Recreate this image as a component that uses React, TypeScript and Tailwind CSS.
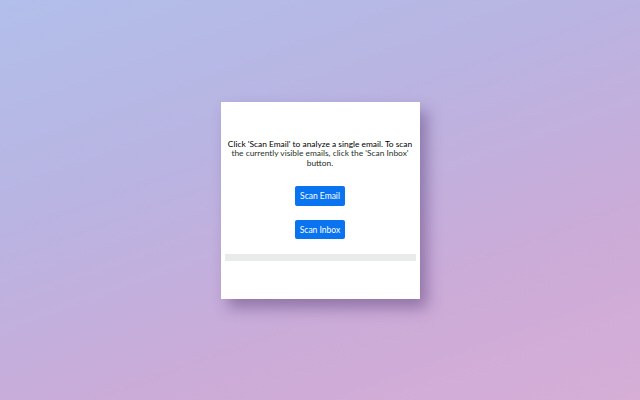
export default function App() {
  return (
    <div className="min-h-screen w-full flex items-center justify-center bg-[linear-gradient(160deg,#b2bfea_0%,#b9b4e2_35%,#cbabd8_70%,#d6aed6_100%)] font-['Lato',sans-serif]">
      <div className="w-[199px] h-[197px] bg-white shadow-[7px_9px_14px_rgba(80,50,110,0.45)] px-[4px] pt-[38px] flex flex-col items-center">
        <div className="flex flex-col items-center text-[8.4px] leading-[9.6px] text-center whitespace-nowrap">
          <span className="text-black">Click 'Scan Email' to analyze a single email. To scan</span>
          <span className="text-[#26331f]">the currently visible emails, click the 'Scan Inbox'</span>
          <span className="text-[#1d2a16]">button.</span>
        </div>
        <button className="mt-[18px] w-[50px] h-[20px] rounded-[2px] bg-[#0a74f0] text-white text-[8.5px] leading-none">
          Scan Email
        </button>
        <button className="mt-[14px] w-[50px] h-[19px] rounded-[2px] bg-[#0a74f0] text-white text-[8.5px] leading-none">
          Scan Inbox
        </button>
        <div className="mt-[15px] w-full h-[7px] bg-[#e9ebea]" />
      </div>
    </div>
  );
}
